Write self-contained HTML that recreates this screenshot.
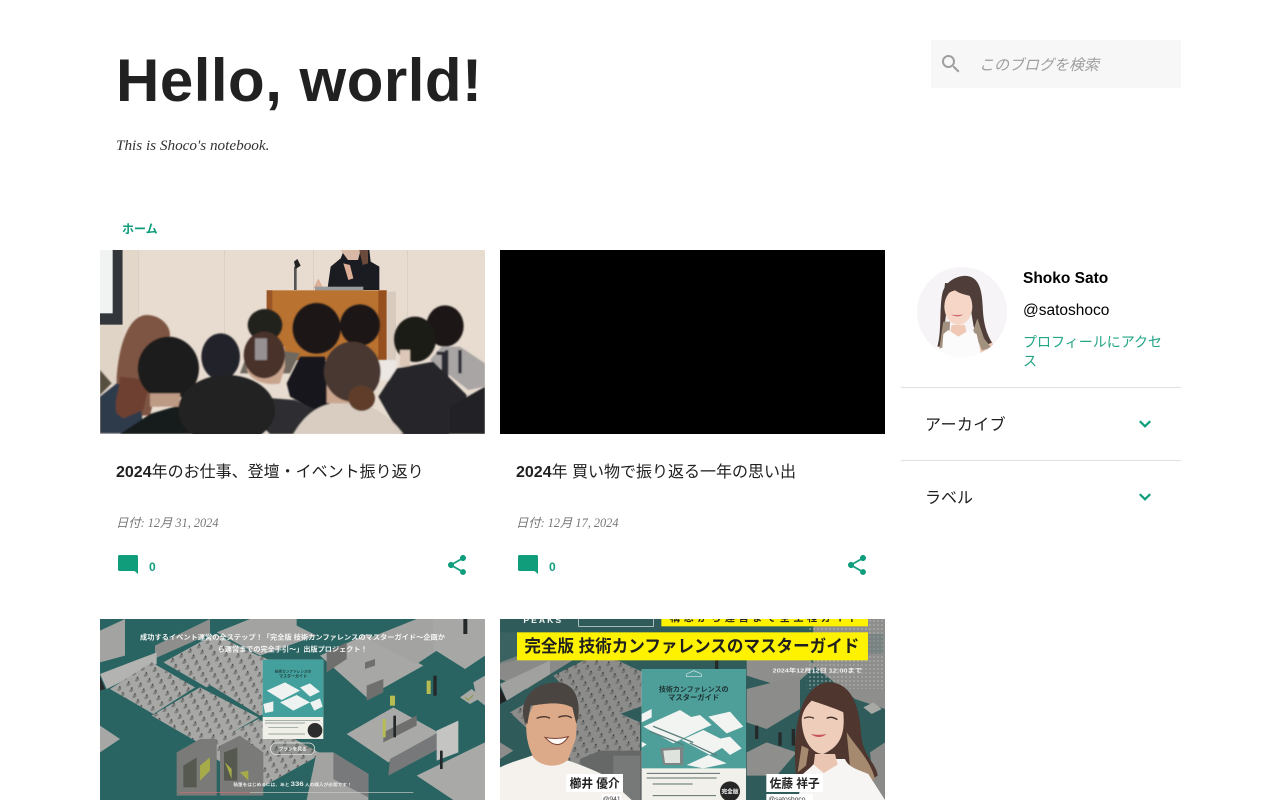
<!DOCTYPE html>
<html lang="ja"><head><meta charset="utf-8"><title>Hello, world!</title>
<style>
html,body{margin:0;padding:0;background:#fff;width:1280px;height:800px;overflow:hidden}
body{position:relative;font-family:"Liberation Sans","Noto Sans CJK JP",sans-serif;color:#212121}
.a{position:absolute;white-space:nowrap;margin:0;line-height:1}
svg{position:absolute;display:block}
.g{color:#0f9d7c}
.d{font-family:"Liberation Serif","Noto Sans CJK JP",serif;font-style:italic;font-size:12.300px;color:#757575}
.t{font-size:16px;color:#212121}
.z{font-family:"Liberation Sans",sans-serif;font-weight:bold;font-size:12px;color:#0f9d7c}
</style></head><body>

<h1 class="a" style="left:116px;top:51px;font-size:60px;font-weight:bold;letter-spacing:.5px;color:#212121">Hello, world!</h1>
<p class="a" style="left:116px;top:138px;font-family:'Liberation Serif',serif;font-style:italic;font-size:15.200px;color:#333">This is Shoco's notebook.</p>

<div class="a" style="left:931px;top:40px;width:250px;height:48px;background:#f7f7f7"></div>
<svg style="left:939px;top:52px" width="24" height="24" viewBox="0 0 24 24"><path fill="#9e9e9e" d="M15.5 14h-.79l-.28-.27A6.47 6.47 0 0 0 16 9.5 6.5 6.5 0 1 0 9.5 16c1.61 0 3.09-.59 4.23-1.57l.27.28v.79l5 4.99L20.49 19l-4.99-5zm-6 0C7.01 14 5 11.99 5 9.5S7.01 5 9.5 5 14 7.01 14 9.5 11.99 14 9.5 14z"/></svg>
<div class="a" style="left:979px;top:58px;font-size:15px;font-style:italic;color:#9e9e9e">このブログを検索</div>

<div class="a g" style="left:122px;top:223px;font-size:12px;font-weight:bold">ホーム</div>

<!-- Card 1 image -->
<svg style="left:100px;top:250px" width="385" height="184" viewBox="0 0 1155 552" preserveAspectRatio="none">
<defs><filter id="b"><feGaussianBlur stdDeviation="2"/></filter></defs>
<rect width="1155" height="552" fill="#e8dcd0"/>
<rect x="0" y="0" width="68" height="224" fill="#33363a"/><rect width="38" height="190" fill="#f1f2f2"/>
<rect x="68" width="47" height="400" fill="#e3d7ca"/>
<rect y="225" width="70" height="180" fill="#e0d4c7"/>
<path d="M374 0v300M641 0v120M923 0v200M115 0v195" stroke="#d5c9bd" stroke-width="2"/>
<path d="M682 120l10-70 30-25 10-25h76l4 35 26 15v70z" fill="#1a1c22"/>
<path d="M722 0h60l-8 30h-30z" fill="#d9b9a6"/><path d="M778 0h26v40l-16 5z" fill="#6b4a3c"/>
<path d="M640 115l15-30 15 30zM730 40l20 5 10 40-15 5z" fill="#dcae98"/>
<rect x="582" y="50" width="8" height="70" fill="#555"/><path d="M582 35l10-8 10 20-15 10z" fill="#222"/>
<rect x="645" y="110" width="145" height="12" fill="#9a9a9c"/>
<rect x="500" y="121" width="360" height="210" fill="#b9722f"/>
<rect x="835" y="121" width="25" height="210" fill="#96501f"/>
<rect x="860" y="125" width="28" height="220" fill="#d8cabd"/>
<rect x="500" y="121" width="17" height="60" fill="#9b5628"/>
<g filter="url(#b)">
<ellipse cx="495" cy="225" rx="52" ry="48" fill="#23201f"/>
<path d="M420 370l30-80 150 20-30 60z" fill="#6e675e"/>
<path d="M50 380c10-130 50-185 90-185s70 30 70 60l-60 240-100 10z" fill="#7e5442"/>
<ellipse cx="650" cy="235" rx="72" ry="76" fill="#1c1919"/>
<ellipse cx="780" cy="225" rx="60" ry="62" fill="#1a1818"/>
<rect x="830" y="330" width="60" height="60" fill="#ece7e3"/>
<ellipse cx="1035" cy="228" rx="56" ry="62" fill="#1b1918"/>
<path d="M990 330l35-40h55l75 50v70l-50 10z" fill="#a9a5a5"/>
<path d="M1010 310h20v100M1040 300v90M1080 300v70" stroke="#2a2a30" stroke-width="10" fill="none"/>
<ellipse cx="945" cy="268" rx="63" ry="68" fill="#1c1a19"/>
<rect x="900" y="300" width="30" height="50" fill="#dcc7b8"/>
<ellipse cx="362" cy="320" rx="58" ry="70" fill="#24222a"/>
<path d="M0 440l50-40 70 20 10 130H0z" fill="#2f3a4c"/>
<path d="M50 490c-10-40 10-70 10-110l90 10-20 90-60 25z" fill="#6d4130"/>
<path d="M0 360l35 40-35 35z" fill="#57503f"/>
<path d="M560 400l40-80h75l15 150-30 20-90-50z" fill="#16171b"/>
<path d="M430 390l25 50 130 10 85 40-5 62H510l-60-60z" fill="#2d2f33"/>
<path d="M440 350c0 40 60 60 100 50l15-50v-60h-115z" fill="#c9a48d"/>
<ellipse cx="493" cy="315" rx="62" ry="70" fill="#4a322b"/>
<rect x="465" y="265" width="36" height="65" fill="#a9a8ad" opacity=".8"/>
<path d="M835 440l55-85 110-20 100 100-15 90-40 30H900z" fill="#26282c"/>
<ellipse cx="205" cy="355" rx="92" ry="95" fill="#1e1c1c"/>
<path d="M60 552l90-60 100-30 30 90z" fill="#191a1e"/>
<rect x="150" y="430" width="90" height="40" fill="#bd9a84"/>
<path d="M1050 470l105-60v142h-105z" fill="#212226"/>
<ellipse cx="380" cy="480" rx="145" ry="105" fill="#222120"/>
<path d="M580 552c30-50 70-95 150-95s130 30 180 95z" fill="#d9cdc2"/>
<rect x="680" y="400" width="120" height="60" fill="#caa58e"/>
<ellipse cx="757" cy="365" rx="85" ry="90" fill="#4a3830"/>
<ellipse cx="785" cy="445" rx="40" ry="38" fill="#5e3d2a"/>
</g>
</svg>

<div class="a" style="left:500px;top:250px;width:385px;height:184px;background:#000"></div>

<div class="a t" style="left:116px;top:465px"><b>2024</b>年のお仕事、登壇・イベント振り返り</div>
<div class="a t" style="left:516px;top:465px"><b>2024</b>年 買い物で振り返る一年の思い出</div>
<div class="a d" style="left:116px;top:517px">日付: 12月 31, 2024</div>
<div class="a d" style="left:516px;top:517px">日付: 12月 17, 2024</div>

<svg style="left:116px;top:553px" width="24" height="24" viewBox="0 0 24 24"><path fill="#0f9d7c" d="M3.500 2h17A1.500 1.500 0 0 1 22 3.500V21l-3.500-3h-15A1.500 1.500 0 0 1 2 16.500v-13A1.500 1.500 0 0 1 3.500 2z"/></svg>
<div class="a z" style="left:149px;top:561px">0</div>
<svg style="left:516px;top:553px" width="24" height="24" viewBox="0 0 24 24"><path fill="#0f9d7c" d="M3.500 2h17A1.500 1.500 0 0 1 22 3.500V21l-3.500-3h-15A1.500 1.500 0 0 1 2 16.500v-13A1.500 1.500 0 0 1 3.500 2z"/></svg>
<div class="a z" style="left:549px;top:561px">0</div>
<svg style="left:445px;top:553px" width="24" height="24" viewBox="0 0 24 24"><path fill="#0f9d7c" d="M18 16.080c-.76 0-1.440.3-1.960.77L8.910 12.700c.05-.23.090-.46.090-.7s-.04-.47-.09-.7l7.050-4.110c.54.5 1.250.81 2.040.81 1.660 0 3-1.340 3-3s-1.340-3-3-3-3 1.340-3 3c0 .24.040.47.090.7L8.040 9.810C7.500 9.310 6.790 9 6 9c-1.660 0-3 1.340-3 3s1.340 3 3 3c.79 0 1.500-.31 2.040-.81l7.120 4.160c-.05.21-.08.43-.08.65 0 1.610 1.310 2.920 2.920 2.920s2.920-1.310 2.920-2.920-1.310-2.920-2.920-2.920z"/></svg>
<svg style="left:845px;top:553px" width="24" height="24" viewBox="0 0 24 24"><path fill="#0f9d7c" d="M18 16.080c-.76 0-1.440.3-1.960.77L8.910 12.700c.05-.23.090-.46.090-.7s-.04-.47-.09-.7l7.050-4.110c.54.5 1.250.81 2.040.81 1.660 0 3-1.340 3-3s-1.340-3-3-3-3 1.340-3 3c0 .24.040.47.090.7L8.040 9.810C7.500 9.310 6.790 9 6 9c-1.660 0-3 1.340-3 3s1.340 3 3 3c.79 0 1.500-.31 2.040-.81l7.120 4.160c-.05.21-.08.43-.08.65 0 1.610 1.310 2.920 2.920 2.920s2.920-1.310 2.920-2.920-1.310-2.920-2.920-2.920z"/></svg>

<!-- Card 3 image -->
<svg style="left:100px;top:619px" width="385" height="181" viewBox="0 0 1155 543" font-family="'Liberation Sans','Noto Sans CJK JP',sans-serif">
<defs><pattern id="ch" width="30" height="20" patternUnits="userSpaceOnUse" patternTransform="rotate(-28)"><path d="M4 14l9-7 7 3-2 6-7 2z" fill="#7d7e7c"/><path d="M14 8l3-3 3 2-3 3z" fill="#3a3a3a"/></pattern></defs>
<rect width="1155" height="543" fill="#2a6462"/>
<path d="M0 35L75 0v110L0 130z" fill="#a3a4a2"/>
<path d="M165 80L330 0v45L165 118z" fill="#8e8f8d"/>
<path d="M0 165L170 100l0 35L20 210z" fill="#b3b3b1"/><path d="M0 172L15 210 0 215z" fill="#2a2a2a"/>
<path d="M190 130L345 45l135 68L320 205z" fill="#a7a8a6"/><path d="M190 130L345 45l135 68L320 205z" fill="url(#ch)"/>
<path d="M30 210L155 130l130 75L160 285z" fill="#a7a8a6"/><path d="M30 210L155 130l130 75L160 285z" fill="url(#ch)"/>
<path d="M155 290L300 205l175 90L320 385z" fill="#a7a8a6"/><path d="M155 290L300 205l175 90L320 385z" fill="url(#ch)"/>
<path d="M325 195L480 110l60 30 0 120-60 30z" fill="#a7a8a6"/><path d="M325 195L480 110l60 30 0 120-60 30z" fill="url(#ch)"/>
<path d="M300 390L475 300l190 105-180 100z" fill="#a7a8a6"/><path d="M300 390L475 300l190 105-180 100z" fill="url(#ch)"/>
<path d="M0 320L60 360 0 400z" fill="#a7a8a6"/>
<path d="M350 40L450 0h140v20l60 30-170 60z" fill="#a3a4a2"/>
<path d="M660 110L800 45l170 95-170 95z" fill="#a7a8a6"/>
<path d="M800 60L950 0h90v75l-90 60z" fill="#a3a4a2"/>
<path d="M1000 0h155v110l-60 40-95-60z" fill="#a7a8a6"/>
<path d="M1120 190L1155 170v90l-25-20z" fill="#a7a8a6"/>
<path d="M1080 235l35-25 30 25-35 20z" fill="#a8a9a5"/><path d="M1095 235l10 8 15-15" stroke="#8c9a3c" stroke-width="3" fill="none"/>
<path d="M740 345L880 265l135 75-150 90z" fill="#a9aaa8"/>
<path d="M870 420L1015 340v50l-150 80z" fill="#77787a"/>
<path d="M1010 335l65-30v95l-65 25z" fill="#c4c4c2"/>
<path d="M950 470l205-100v173H1060z" fill="#a9aaa8"/>
<path d="M650 400l50 0 105 65v78H620z" fill="#a3a4a2"/>
<path d="M700 400l105 65v70L700 480z" fill="#77797a"/>
<path d="M795 130v20l30-10v-20zM680 100l60-30v50l-60 40zM800 200l50-20v40l-50 25zM850 340l100-50v30l-100 50z" fill="#6f706e"/>
<path d="M230 400l70-40h50v170l-120 0zM360 380l60-30 70 50v130H360z" fill="#7a7b79"/>
<path d="M250 440l40-25v90h-40zM372 400l40-15v100h-40z" fill="#55594f"/>
<path d="M300 440l30-25v40l-30 30zM375 430l20 20v30zM420 460l25-5 0 30z" fill="#a6ab4a"/>
<g fill="#b7bd53"><rect x="848" y="300" width="9" height="55"/><rect x="870" y="230" width="15" height="30"/><rect x="980" y="185" width="12" height="40"/></g>
<g fill="#24282a"><rect x="880" y="290" width="8" height="65"/><rect x="1000" y="170" width="10" height="60"/><rect x="1020" y="395" width="8" height="55"/><rect x="1090" y="0" width="12" height="45"/></g>
<g font-size="20" font-weight="bold" fill="#f4f6f5">
<text x="120" y="62" textLength="915" lengthAdjust="spacingAndGlyphs">成功するイベント運営の全ステップ！「完全版 技術カンファレンスのマスターガイド〜企画か</text>
<text x="353" y="98" textLength="450" lengthAdjust="spacingAndGlyphs">ら運営までの完全手引〜」出版プロジェクト！</text>
</g>
<rect x="488" y="122" width="182" height="238" fill="#f0efe8"/>
<rect x="488" y="122" width="182" height="172" fill="#43a09c"/>
<text x="579" y="161" font-size="11" font-weight="bold" fill="#244" text-anchor="middle">技術カンファレンスの</text>
<text x="579" y="176" font-size="12" font-weight="bold" fill="#244" text-anchor="middle">マスターガイド</text>
<path d="M500 215l55-25 45 25-55 28zM600 205l30-12 30 25-30 15zM540 250l50-22 40 22-50 25zM490 255l30-8 0 30-25 5zM630 250l30-12 8 25-25 12z" fill="#eef2f0"/>
<circle cx="645" cy="334" r="22" fill="#2c2c2c"/>
<path d="M495 305h165M495 312h120M505 325h90M505 345h110" stroke="#7d8a88" stroke-width="2"/>
<rect x="512" y="372" width="132" height="35" rx="17" fill="#555c58" fill-opacity=".25" stroke="#f0f0ee" stroke-width="2"/>
<text x="578" y="395" font-size="14" font-weight="bold" fill="#f3f3f1" text-anchor="middle">プランを見る</text>
<text x="400" y="501" font-size="12" font-weight="bold" fill="#eee" textLength="355" lengthAdjust="spacingAndGlyphs">執筆をはじめるには、あと <tspan font-size="20">336</tspan> 人の購入が必要です！</text>
<rect x="240" y="519" width="700" height="2" fill="#c9cbc9"/><rect x="240" y="519" width="210" height="2" fill="#c0606a"/>
</svg>

<!-- Card 4 image -->
<svg style="left:500px;top:619px" width="385" height="181" viewBox="0 0 1155 543" font-family="'Liberation Sans','Noto Sans CJK JP',sans-serif">
<defs>
<pattern id="ch2" width="30" height="20" patternUnits="userSpaceOnUse" patternTransform="rotate(-28)"><path d="M4 14l9-7 7 3-2 6-7 2z" fill="#727371"/><path d="M14 8l3-3 3 2-3 3z" fill="#2a2a2a"/></pattern>
<pattern id="dt" width="12" height="12" patternUnits="userSpaceOnUse"><circle cx="6" cy="6" r="3" fill="#b9bdbb"/></pattern>
</defs>
<rect width="1155" height="543" fill="#2f5c5b"/>
<path d="M0 130L150 75 240 110 80 210 0 180z" fill="#8a8b89"/>
<path d="M0 195L150 125v40L20 245z" fill="#a1a2a0"/><path d="M0 205L20 245 0 255z" fill="#222"/>
<path d="M160 170L300 100l130 60v100L290 310z" fill="#8c8d8b"/><path d="M160 170L300 100l130 60v100L290 310z" fill="url(#ch2)"/>
<path d="M30 280L170 200l250 110v110L300 420 220 460z" fill="#8c8d8b"/><path d="M30 280L170 200l250 110v110L300 420 220 460z" fill="url(#ch2)"/>
<path d="M0 370L40 395 0 420z" fill="#8c8d8b"/>
<path d="M240 420l60-25h125v148H260z" fill="#666867"/>
<path d="M340 410h80v133h-80z" fill="#777978"/>
<path d="M740 110L850 70l100 70-80 70-130-40z" fill="#8e8f8d"/>
<path d="M740 210L900 170v100l-100 60-60-20z" fill="#8c8d8b"/>
<path d="M940 0h215v270l-90-30-125-100z" fill="#8e8f8d"/><rect x="920" y="0" width="235" height="210" fill="url(#dt)" opacity=".55"/>
<path d="M1090 265l30-15 25 20-30 15z" fill="#a8a9a5"/>
<path d="M740 400l60-30 90 30-60 70h-90z" fill="#8e8f8d"/>
<path d="M1110 400l45-30v173h-30z" fill="#8a8b89"/>
<path d="M0 40h120v65L0 135z M820 45h330v60H820z" fill="#4f6e6d" opacity=".35"/>
<path d="M770 320v40M880 330v50M840 340v40M650 120v30" stroke="#26292a" stroke-width="10"/>
<text x="70" y="12" font-size="26" fill="#f2f4f3" letter-spacing="6" font-weight="bold">PEAKS</text>
<rect x="236" y="-5" width="225" height="27" fill="#2f5c5b" stroke="#e5e8e6" stroke-width="2"/>
<rect x="484" y="-10" width="620" height="32" fill="#fff200"/>
<text x="510" y="8" font-size="30" font-weight="bold" fill="#232323" textLength="565">構想から運営まで全工程ガイド</text>
<rect x="51" y="40" width="1053" height="84" fill="#fff200"/>
<text x="73" y="99" font-size="52" font-weight="bold" fill="#1f1f1f" textLength="1005" lengthAdjust="spacingAndGlyphs">完全版 技術カンファレンスのマスターガイド</text>
<text x="818" y="161" font-size="17" font-weight="bold" fill="#f2f2f2" textLength="268" lengthAdjust="spacingAndGlyphs">2024年12月12日 12:00まで</text>

<!-- man -->
<path d="M0 445c30-15 70-25 95-35l110 15c30 10 70 25 110 45l80 73H0z" fill="#f5f2ee"/>
<path d="M80 300c-5 50 5 85 20 115 30 35 85 30 105 5l22-60 5-70-20-50-100-5z" fill="#dcaa88"/>
<path d="M70 290c-8-60 40-100 100-100 50 0 72 45 65 105l-6 20-12-50c-40-20-85-10-125-5l-10 55-8-5z" fill="#4a4541"/>
<path d="M110 298q25-10 40 0M175 295q25-10 40 2" stroke="#4a362e" stroke-width="4" fill="none"/>
<path d="M135 355q40 45 70-2q-35 10-70 2z" fill="#fdf9f5" stroke="#7d4436" stroke-width="3"/>
<!-- book -->
<rect x="425" y="150" width="313" height="393" fill="#f1f0ea"/>
<rect x="425" y="150" width="313" height="298" fill="#4e9e9a"/>
<text x="581" y="218" font-size="21" font-weight="bold" fill="#1e3433" text-anchor="middle">技術カンファレンスの</text>
<text x="581" y="243" font-size="22" font-weight="bold" fill="#1e3433" text-anchor="middle">マスターガイド</text>
<path d="M560 165l22-10 22 10v8h-44z" fill="none" stroke="#d8e6e4" stroke-width="2"/>
<path d="M430 323l110-50 80 50-100 50zM555 298l45-10 35 30-45 20zM625 293l65-15 40 45-50 20zM545 363l65-30 80 40-60 35zM560 438l65-30 55 25-70 15zM640 363l50-10 35 35-35 20zM425 285l30-15 0 25-30 15zM425 368l15 8-15 10z" fill="#f2f4f2"/>
<path d="M480 388l70-5v55h-60z" fill="#7d8584"/><path d="M490 395l50-3v40h-45z" fill="#dfe3dd"/>
<g fill="#5a7f7c"><rect x="460" y="320" width="130" height="4" transform="rotate(22 460 320)"/><rect x="450" y="335" width="110" height="4" transform="rotate(22 450 335)"/><rect x="570" y="370" width="90" height="4" transform="rotate(25 570 370)"/></g>
<circle cx="690" cy="517" r="30" fill="#262626"/>
<text x="690" y="523" font-size="17" font-weight="bold" fill="#fff" text-anchor="middle">完全版</text>
<path d="M440 463h220M440 477h210M458 495h120M458 530h190" stroke="#5f6f6d" stroke-width="3"/>
<!-- woman -->
<path d="M888 470c-10-110 0-260 90-280 75-5 100 70 105 150 3 70 45 90 50 130l-60 40H900z" fill="#4f362f"/>
<path d="M1040 340c25 40 70 80 85 140l-55 35-20-70zM905 380l-12 80 25-20 8-50z" fill="#a58a70"/>
<path d="M905 470c10-15 35-25 45-50h85c10 25 35 30 70 45l50 78H895z" fill="#f6f5f3"/>
<path d="M905 300c3-25 15-40 30-55 30 10 75 25 95 35 5 60-5 100-60 125-35 0-65-45-65-105z" fill="#efcdbb"/>
<path d="M945 405h60l8 32-42 25-30-25z" fill="#eac5b2"/>
<path d="M932 345q25 18 48 0q-24 5-48 0z" fill="#c8525e"/>
<path d="M912 298q15-8 30 0M980 298q15-8 32 4" stroke="#3c2a25" stroke-width="4" fill="none"/>
<!-- names -->
<rect x="199" y="465" width="170" height="54" fill="#fff"/>
<text x="209" y="505" font-size="36" font-weight="bold" fill="#222" textLength="150" lengthAdjust="spacingAndGlyphs">櫛井 優介</text>
<rect x="305" y="525" width="60" height="22" fill="#fff"/>
<text x="308" y="546" font-size="20" fill="#333">@941</text>
<rect x="799" y="465" width="170" height="54" fill="#fff"/>
<text x="809" y="505" font-size="36" font-weight="bold" fill="#222" textLength="150" lengthAdjust="spacingAndGlyphs">佐藤 祥子</text>
<rect x="799" y="525" width="140" height="22" fill="#fff"/>
<text x="805" y="546" font-size="20" fill="#333">@satoshoco</text>
</svg>

<!-- Profile -->
<svg style="left:917px;top:267px" width="90" height="90" viewBox="51 36 270 270">
<defs><clipPath id="c"><circle cx="186" cy="171" r="135"/></clipPath></defs>
<g clip-path="url(#c)">
<rect x="51" y="36" width="270" height="270" fill="#f6f4f7"/>
<path d="M100 295c5-30 20-50 50-60h80c30 10 50 30 55 60v11H100z" fill="#fbfafa"/>
<path d="M240 240c25 5 42 20 46 50l-30 16h-20z" fill="#eec8b5"/>
<path d="M112 275c14-50 5-110 15-160 10-40 50-55 75-52 38 5 44 50 46 90 2 50 10 80 28 110l-30 12-25-60-10-60h-70l-10 80-5 40z" fill="#4e3d38"/>
<path d="M118 280c5-30 8-60 12-80l20 0-3 75zM232 190l20 60 22 28-28 8-26-60z" fill="#a3917f"/>
<ellipse cx="175" cy="155" rx="42" ry="55" fill="#f6d6c6"/>
<path d="M130 130c10-15 25-22 35-24 15 10 35 15 55 18l-5-35-80-5z" fill="#4e3d38"/>
<path d="M155 210h40l5 25-25 15-25-15z" fill="#f0c8b6"/>
<path d="M152 178q22 12 38 0q-20 4-38 0z" fill="#cc6670"/>
<path d="M145 225l30 20 30-18 25 10 15 70H125l5-70z" fill="#fbfbfb"/>
</g></svg>
<div class="a" style="left:1023px;top:271px;font-size:15.500px;font-weight:bold;color:#000">Shoko Sato</div>
<div class="a" style="left:1023px;top:303px;font-size:15.500px;color:#000">@satoshoco</div>
<div class="a g" style="left:1023px;top:333px;font-size:14px;line-height:19px;color:#23a586">プロフィールにアクセ<br>ス</div>
<div class="a" style="left:901px;top:387px;width:280px;height:1px;background:#e0e0e0"></div>
<div class="a" style="left:901px;top:460px;width:280px;height:1px;background:#e0e0e0"></div>
<div class="a" style="left:925px;top:418px;font-size:16px;letter-spacing:.4px;color:#212121">アーカイブ</div>
<div class="a" style="left:925px;top:491px;font-size:16px;color:#212121">ラベル</div>
<svg style="left:1133px;top:412px" width="24" height="24" viewBox="0 0 24 24"><path fill="none" stroke="#0f9d7c" stroke-width="2.200" d="M6.800 9.200L12 14.300l5.200-5.100"/></svg>
<svg style="left:1133px;top:485px" width="24" height="24" viewBox="0 0 24 24"><path fill="none" stroke="#0f9d7c" stroke-width="2.200" d="M6.800 9.200L12 14.300l5.200-5.100"/></svg>
</body></html>
